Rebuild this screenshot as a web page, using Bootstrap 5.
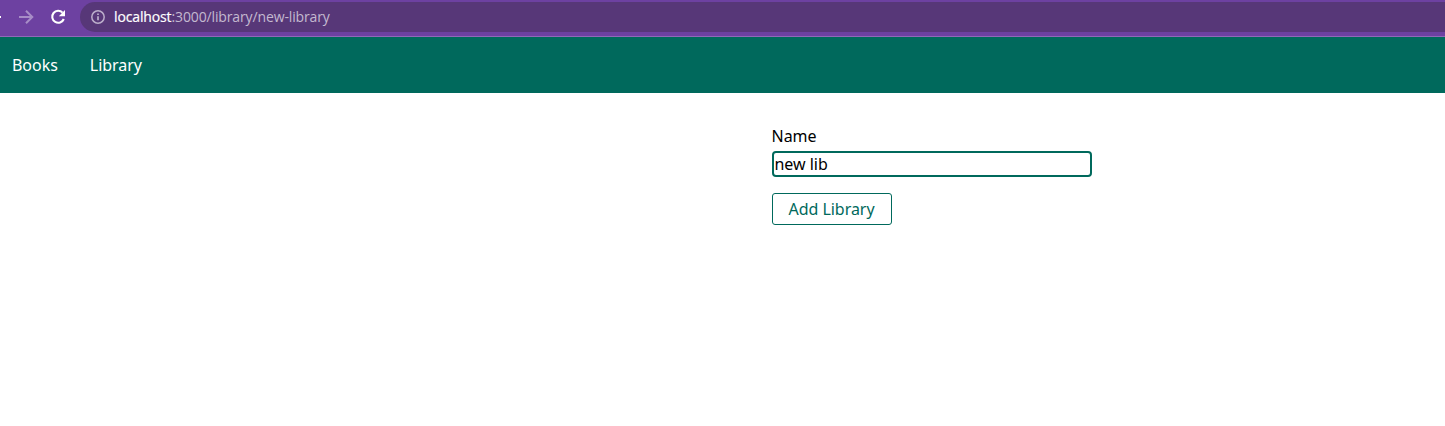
<!DOCTYPE html>
<html lang="en">
<head>
<meta charset="utf-8">
<meta name="viewport" content="width=device-width, initial-scale=1">
<title>New library</title>
<link href="https://cdn.jsdelivr.net/npm/bootstrap@5.3.0/dist/css/bootstrap.min.css" rel="stylesheet">
<style>
  body { font-family: "Noto Sans", "Open Sans", sans-serif; font-size: 16px; line-height: 24px; letter-spacing: -.03px; color: #000; min-height: 100vh; overflow: hidden; }
  .browser-bar { height: 37px; background: #6d41a1; border-bottom: 1px solid #9168b8; padding-top: 2px; }
  .browser-bar svg { display: block; flex: none; }
  .tools { width: 80px; height: 30px; flex: none; }
  .address { height: 30px; background: #573778; border-radius: 15px 0 0 15px; padding-left: 10px; gap: 8px; font-family: "Open Sans", "Noto Sans", sans-serif; font-size: 14px; line-height: 30px; letter-spacing: -.13px; color: #c4b9d0; }
  .url-host { color: #fff; -webkit-text-stroke: .2px #fff; }
  .site-nav { height: 56px; background: #00695c; padding: 0 12px; gap: 32px; }
  .site-nav .nav-link { color: #fff; padding: 0; }
  .library-form { width: 320px; margin: 31px 0 0 772px; }
  .library-form .form-label { margin-bottom: 3px; margin-left: -.5px; }
  .library-form .form-control { height: 26px; padding: 0 1px 0 .5px; border: 2px solid #00695c; border-radius: 4px; color: #000; line-height: 22px; letter-spacing: inherit; box-shadow: none; }
  .btn-add { width: 120px; height: 32px; margin-top: 16px; padding: 0 1px 0 0; line-height: 30px; letter-spacing: inherit; border-radius: 3px; --bs-btn-color: #00695c; --bs-btn-border-color: #00695c; --bs-btn-hover-bg: #00695c; --bs-btn-hover-color: #fff; }
</style>
<script defer src="https://cdn.jsdelivr.net/npm/bootstrap@5.3.0/dist/js/bootstrap.bundle.min.js"></script>
</head>
<body class="bg-white">
  <header class="browser-bar d-flex align-items-start">
    <svg class="tools" viewBox="0 0 80 30" fill="none" aria-hidden="true">
      <path d="M0 15h1" stroke="#fff" stroke-width="2"/>
      <path d="M19 15h13M26 8.7l6.3 6.3-6.3 6.3" stroke="#a78dc7" stroke-width="2"/>
      <path d="M62.6 10.6A6 6 0 1 0 63.8 17" stroke="#fff" stroke-width="2.1"/>
      <path d="M65 8v6.2h-6.2z" fill="#fff"/>
    </svg>
    <div class="address d-flex align-items-center flex-grow-1">
      <svg width="16" height="16" viewBox="0 0 16 16" fill="none" aria-hidden="true">
        <circle cx="8" cy="8" r="6.2" stroke="#bcaecb" stroke-width="1.5"/>
        <path d="M8 7.2v4M8 4.6v1.5" stroke="#bcaecb" stroke-width="1.7"/>
      </svg>
      <div class="url-text text-nowrap"><span class="url-host">localhost</span><span>:3000/library/new-library</span></div>
    </div>
  </header>
  <nav class="site-nav d-flex align-items-center">
    <a class="nav-link" href="#">Books</a>
    <a class="nav-link" href="#">Library</a>
  </nav>
  <main>
    <form class="library-form">
      <label class="form-label d-block" for="name">Name</label>
      <input class="form-control" id="name" type="text" value="new lib">
      <button class="btn btn-add" type="button">Add Library</button>
    </form>
  </main>
</body>
</html>
